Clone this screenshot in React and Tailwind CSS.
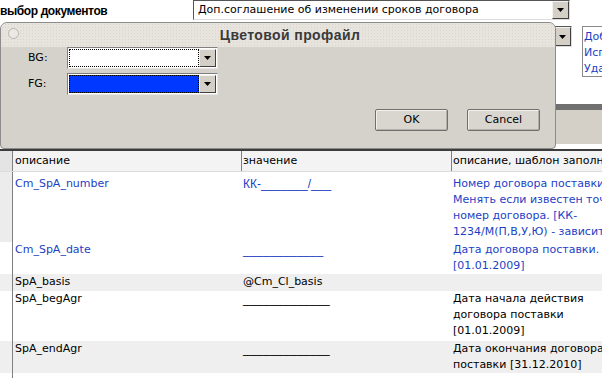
const blue = 'text-[#1c3fc4]';
const under = "font-['Liberation_Sans',sans-serif] text-[12px]";

function Arrow() {
  return (
    <svg width="7" height="4" viewBox="0 0 7 4">
      <polygon points="0,0 7,0 3.5,4" fill="#000" />
    </svg>
  );
}

function DropBtn({ className = '' }) {
  return (
    <div
      className={`w-[17px] shrink-0 flex items-center justify-center bg-[#d4d0c8] border border-t-[#f4f2ee] border-l-[#f4f2ee] border-r-[#404040] border-b-[#404040] ${className}`}
    >
      <Arrow />
    </div>
  );
}

function ColorSelect({ fill }) {
  return (
    <div className="w-[151px] h-[22px] flex border border-t-[#7f7f7f] border-l-[#7f7f7f] border-r-[#e8e6e2] border-b-[#e8e6e2] bg-white p-px">
      <div className={`flex-1 border border-dotted border-black ${fill}`} />
      <DropBtn />
    </div>
  );
}

function Btn({ children }) {
  return (
    <div className="w-[73px] h-[22px] flex items-center justify-center rounded-[2px] border border-[#6f6f6f] bg-[#d9d6d0] shadow-[inset_1px_1px_0_#f3f1ec,inset_-1px_-1px_0_#b5b1aa] text-[11px] text-black">
      {children}
    </div>
  );
}

function Dialog() {
  return (
    <div className="absolute left-0 top-[22px] w-[556px] h-[127px] rounded-t-[7px] rounded-b-[4px] border border-[#8c8c8c] bg-[#d5d2cc] overflow-hidden flex flex-col">
      <div className="h-[24px] shrink-0 relative flex items-center justify-center pl-[24px] bg-[#e7e4de] bg-[radial-gradient(#d9d5ce_0.6px,transparent_0.8px)] bg-[length:3px_3px]">
        <div className="absolute left-[7px] top-[5px] w-[11px] h-[11px] rounded-full border border-[#b7b4ae] bg-[#ebe9e5]" />
        <span className="font-['Liberation_Sans',sans-serif] font-bold text-[14px] text-[#3a3a3a] tracking-[0.4px]">Цветовой профайл</span>
      </div>
      <div className="flex flex-col pl-[27px] pt-0">
        <div className="flex items-center gap-0">
          <span className="w-[39px] text-[11px] text-black">BG:</span>
          <ColorSelect fill="bg-white" />
        </div>
        <div className="flex items-center mt-[4px]">
          <span className="w-[39px] text-[11px] text-black">FG:</span>
          <ColorSelect fill="bg-[#0038ff]" />
        </div>
      </div>
      <div className="flex justify-end gap-[19px] pr-[15px] mt-[14px]">
        <Btn>OK</Btn>
        <Btn>Cancel</Btn>
      </div>
    </div>
  );
}

const rows = [
  {
    h: 'h-[70px] pt-[4px]',
    bg: 'bg-white',
    side: 'bg-[#ececec]',
    name: 'Cm_SpA_number',
    nameCls: blue,
    val: 'КК-_______/___',
    valCls: `${blue} ${under}`,
    desc: ['Номер договора поставки.', 'Менять если известен точный', 'номер договора. [КК-', '1234/М(П,В,У,Ю) - зависит'],
    descCls: blue,
  },
  {
    h: 'h-[32px]',
    bg: 'bg-white',
    side: 'bg-white',
    name: 'Cm_SpA_date',
    nameCls: blue,
    val: '____________',
    valCls: `${blue} ${under}`,
    desc: ['Дата договора поставки.', '[01.01.2009]'],
    descCls: blue,
  },
  {
    h: 'h-[17px]',
    bg: 'bg-[#efefef]',
    side: 'bg-[#efefef]',
    name: 'SpA_basis',
    nameCls: 'text-black',
    val: '@Cm_Cl_basis',
    valCls: 'text-black',
    desc: [],
    descCls: 'text-black',
  },
  {
    h: 'h-[50px]',
    bg: 'bg-white',
    side: 'bg-white',
    name: 'SpA_begAgr',
    nameCls: 'text-black',
    val: '_____________',
    valCls: `text-black ${under}`,
    desc: ['Дата начала действия', 'договора поставки', '[01.01.2009]'],
    descCls: 'text-black',
  },
  {
    h: 'h-[32px]',
    bg: 'bg-[#efefef]',
    side: 'bg-[#efefef]',
    name: 'SpA_endAgr',
    nameCls: 'text-black',
    val: '_____________',
    valCls: `text-black ${under}`,
    desc: ['Дата окончания договора', 'поставки [31.12.2010]'],
    descCls: 'text-black',
  },
];

const cols = 'grid grid-cols-[13px_229px_210px_150px]';

export default function App() {
  return (
    <div className="relative w-[602px] h-[378px] overflow-hidden bg-white font-['DejaVu_Sans',sans-serif] text-[11px] leading-[16px]">
      {/* page behind the dialog */}
      <div className="h-[149px] flex flex-col">
        <div className="h-[22px] flex items-start">
          <div className="w-[193px] shrink-0 font-['Liberation_Sans',sans-serif] font-bold text-[12px] tracking-[-0.4px] leading-[18px] text-black pt-[2px]">выбор документов</div>
          <div className="w-[377px] shrink-0 h-[20px] flex border border-t-[#555] border-l-[#555] border-r-[#ddd] border-b-[#ddd] bg-white">
            <div className="flex-1 pl-[4px] leading-[18px] text-black">Доп.соглашение об изменении сроков договора</div>
            <DropBtn />
          </div>
        </div>
        <div className="h-[82px] flex pt-[4px]">
          <div className="w-[193px] shrink-0" />
          <div className="w-[379px] shrink-0 h-[21px] flex border border-t-[#555] border-l-[#555] border-r-[#ddd] border-b-[#ddd] bg-white">
            <div className="flex-1" />
            <DropBtn />
          </div>
          <div className="ml-[10px] flex-1 min-w-0 h-[51px] border-l border-t border-b border-[#8a8a8a] pl-px pt-[2px] flex flex-col text-[#1c3fc4] leading-[16px] overflow-hidden whitespace-nowrap">
            <span>Добавить</span>
            <span>Использовать</span>
            <span>Удалить</span>
          </div>
        </div>
        <div className="h-[6px] bg-[#707070]" />
        <div className="h-[34px] bg-[#d4d0c8]" />
        <div className="h-[5px] bg-white" />
      </div>

      {/* table */}
      <div className="border-t-2 border-[#3c3c3c]">
        <div className={`${cols} h-[21px] bg-[#f3f3f3] border-b border-[#dcdcdc]`}>
          <div className="bg-[#e4e4e4] border-r border-[#808080]" />
          <div className="pl-[2px] leading-[20px] text-black border-r border-[#808080]">описание</div>
          <div className="pl-px leading-[20px] text-black border-r border-[#808080]">значение</div>
          <div className="pl-px leading-[20px] text-black whitespace-nowrap">описание, шаблон заполнения</div>
        </div>
        {rows.map((r, i) => (
          <div key={i} className={`${cols} ${r.bg}`}>
            <div className={`${r.side} border-r border-[#808080]`} />
            <div className={`${r.h} pl-[2px] ${r.nameCls}`}>{r.name}</div>
            <div className={`${r.h} pl-px leading-[16px] ${r.valCls}`}>{r.val}</div>
            <div className={`${r.h} pl-px ${r.descCls} whitespace-nowrap overflow-hidden`}>
              {r.desc.map((d, j) => (
                <div key={j}>{d}</div>
              ))}
            </div>
          </div>
        ))}
        <div className={`${cols} h-[10px]`}>
          <div className="border-r border-[#808080]" />
        </div>
      </div>

      <Dialog />
    </div>
  );
}
